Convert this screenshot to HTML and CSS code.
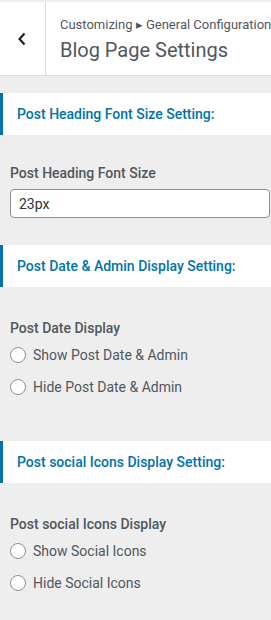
FILE: index.html
```html
<!DOCTYPE html>
<html lang="en">
<head>
  <meta charset="UTF-8">
  <meta name="viewport" content="width=device-width, initial-scale=1.0">
  <title>Blog Page Settings</title>
  <link rel="stylesheet" href="styles.css">
</head>
<body>
  <header class="panel-header">
    <button class="back-btn" aria-label="Back">
      <svg width="10" height="14" viewBox="0 0 10 14"><polyline points="7.5,1.5 2.5,7 7.5,12.5" fill="none" stroke="#1d2327" stroke-width="2.2"/></svg>
    </button>
    <div class="panel-title">
      <span class="breadcrumb">Customizing &#9656; General Configuration</span>
      <h1>Blog Page Settings</h1>
    </div>
  </header>

  <h2 class="section-title">Post Heading Font Size Setting:</h2>
  <div class="control control-text">
    <label class="control-label" for="headingSize">Post Heading Font Size</label>
    <input type="text" id="headingSize" value="23px">
  </div>

  <h2 class="section-title">Post Date &amp; Admin Display Setting:</h2>
  <div class="control">
    <span class="control-label">Post Date Display</span>
    <label class="radio"><input type="radio" name="postDate"> Show Post Date &amp; Admin</label>
    <label class="radio"><input type="radio" name="postDate"> Hide Post Date &amp; Admin</label>
  </div>

  <h2 class="section-title">Post social Icons Display Setting:</h2>
  <div class="control">
    <span class="control-label">Post social Icons Display</span>
    <label class="radio"><input type="radio" name="socialIcons"> Show Social Icons</label>
    <label class="radio"><input type="radio" name="socialIcons"> Hide Social Icons</label>
  </div>
</body>
</html>
```

FILE: styles.css
```css
body {
  margin: 0;
  padding-top: 2px;
  background-color: #eeeeee;
  font-family: Roboto, "Liberation Sans", sans-serif;
  color: #50575e;
}
.panel-header {
  display: flex;
  height: 73px;
  background-color: #fff;
  border-bottom: 1px solid #dcdcde;
}
.back-btn {
  width: 46px;
  padding: 0;
  border: none;
  border-right: 1px solid #dcdcde;
  background: none;
  display: flex;
  align-items: center;
  justify-content: center;
}
.panel-title {
  padding: 14px 0 0 14px;
  white-space: nowrap;
  overflow: hidden;
}
.breadcrumb {
  display: block;
  font-size: 13px;
  line-height: 18px;
  color: #50575e;
}
h1 {
  margin: 3px 0 0;
  font-size: 20px;
  font-weight: 400;
  line-height: 26px;
  color: #50575e;
}
.section-title {
  margin: 17px 0 0;
  height: 42px;
  box-sizing: border-box;
  padding-left: 14px;
  border-left: 3px solid #0073aa;
  background-color: #fff;
  font-size: 14px;
  font-weight: 500;
  line-height: 42px;
  color: #0073aa;
}
.control {
  display: flex;
  flex-direction: column;
  gap: 12px;
  padding: 31px 1px 0 10px;
  margin-bottom: 44px;
}
.control-text {
  padding-top: 28px;
  gap: 6px;
  margin-bottom: 27px;
}
.control-label {
  font-size: 14px;
  font-weight: 500;
  line-height: 20px;
  color: #50575e;
  margin-bottom: -5px;
}
.control-text .control-label {
  margin-bottom: 0;
}
.control input[type="text"] {
  height: 29px;
  box-sizing: border-box;
  padding: 0 8px;
  border: 1px solid #8c8f94;
  border-radius: 4px;
  font-family: inherit;
  font-size: 14px;
  color: #2c3338;
  background-color: #fff;
}
.radio {
  display: flex;
  align-items: center;
  gap: 7px;
  font-size: 14px;
  line-height: 20px;
  color: #50575e;
}
.radio input {
  appearance: none;
  width: 16px;
  height: 16px;
  margin: 0;
  border: 1px solid #8c8f94;
  border-radius: 50%;
  background-color: #fff;
}
```
